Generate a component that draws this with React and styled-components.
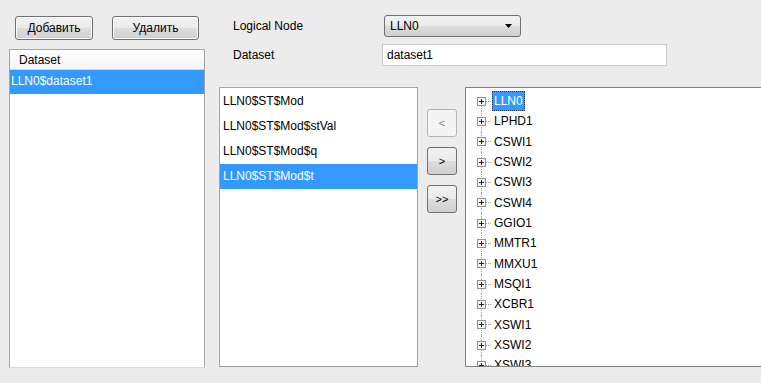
import React from "react";
import styled, { createGlobalStyle } from "styled-components";

const GlobalStyle = createGlobalStyle`
  html, body {
    margin: 0;
    padding: 0;
    background: #ececec;
    font-family: "Liberation Sans", Arial, sans-serif;
    font-size: 12px;
    color: #000;
    overflow: hidden;
  }
`;

const datasets = ["LLN0$dataset1"];
const members = [
  "LLN0$ST$Mod",
  "LLN0$ST$Mod$stVal",
  "LLN0$ST$Mod$q",
  "LLN0$ST$Mod$t",
];
const nodes = [
  "LLN0",
  "LPHD1",
  "CSWI1",
  "CSWI2",
  "CSWI3",
  "CSWI4",
  "GGIO1",
  "MMTR1",
  "MMXU1",
  "MSQI1",
  "XCBR1",
  "XSWI1",
  "XSWI2",
  "XSWI3",
];

const PlusBox = () => (
  <svg width="9" height="9" viewBox="0 0 9 9">
    <rect x="0.5" y="0.5" width="8" height="8" fill="#f4f4f4" stroke="#919191" />
    <path d="M2 4.5h5M4.5 2v5" stroke="#222" strokeWidth="1" />
  </svg>
);

const ArrowDown = () => (
  <svg width="7" height="4" viewBox="0 0 7 4">
    <path d="M0 0h7L3.5 4z" fill="#000" />
  </svg>
);

export default function App() {
  return (
    <>
      <GlobalStyle />
      <Page>
        <LeftColumn>
          <ButtonRow>
            <WinButton $w={78}>Добавить</WinButton>
            <WinButton $w={87}>Удалить</WinButton>
          </ButtonRow>
          <DatasetList>
            <ListHeader>Dataset</ListHeader>
            {datasets.map((d) => (
              <DatasetRow key={d} $selected>
                {d}
              </DatasetRow>
            ))}
          </DatasetList>
        </LeftColumn>

        <RightArea>
          <Form>
            <FieldLabel>Logical Node</FieldLabel>
            <Combo>
              <span>LLN0</span>
              <ArrowDown />
            </Combo>
            <FieldLabel>Dataset</FieldLabel>
            <TextInput>dataset1</TextInput>
          </Form>

          <BottomRow>
            <MemberList>
              {members.map((m, i) => (
                <MemberRow key={m} $selected={i === 3}>
                  {m}
                </MemberRow>
              ))}
            </MemberList>

            <MoveButtons>
              <MoveButton $disabled>&lt;</MoveButton>
              <MoveButton>&gt;</MoveButton>
              <MoveButton>&gt;&gt;</MoveButton>
            </MoveButtons>

            <Tree>
              {nodes.map((n, i) => (
                <TreeRow key={n} $first={i === 0} $last={i === nodes.length - 1}>
                  <PlusBox />
                  <Dash />
                  <TreeText $selected={i === 0}>{n}</TreeText>
                </TreeRow>
              ))}
            </Tree>
          </BottomRow>
        </RightArea>
      </Page>
    </>
  );
}

const Page = styled.div`
  display: flex;
  height: 383px;
  padding-left: 9px;
  box-sizing: border-box;
`;

const LeftColumn = styled.div`
  display: flex;
  flex-direction: column;
  width: 196px;
  flex-shrink: 0;
`;

const ButtonRow = styled.div`
  display: flex;
  gap: 19px;
  padding: 16px 0 0 6px;
  height: 24px;
`;

const WinButton = styled.div`
  width: ${(p) => p.$w}px;
  height: 24px;
  box-sizing: border-box;
  border: 1px solid #707070;
  border-radius: 3px;
  background: linear-gradient(#f2f2f2 0%, #ebebeb 48%, #dddddd 52%, #cfcfcf 100%);
  box-shadow: inset 0 0 0 1px #fcfcfc;
  display: flex;
  align-items: center;
  justify-content: center;
`;

const DatasetList = styled.div`
  margin-top: 9px;
  height: 319px;
  box-sizing: border-box;
  border: 1px solid #a5a5a5;
  border-bottom-color: #d8d8d8;
  background: #fff;
  overflow: hidden;
`;

const ListHeader = styled.div`
  height: 20px;
  box-sizing: border-box;
  padding-left: 9px;
  line-height: 21px;
  background: linear-gradient(#ffffff, #f3f4f6);
  border-bottom: 1px solid #d5d5d5;
`;

const DatasetRow = styled.div`
  height: 24px;
  line-height: 22px;
  padding-left: 1px;
  background: ${(p) => (p.$selected ? "#3399ff" : "transparent")};
  color: ${(p) => (p.$selected ? "#fff" : "#000")};
`;

const RightArea = styled.div`
  display: flex;
  flex-direction: column;
  margin-left: 14px;
  flex: 1;
  min-width: 0;
`;

const Form = styled.div`
  display: grid;
  grid-template-columns: 149px auto;
  grid-template-rows: 22px 22px;
  row-gap: 7px;
  padding: 15px 0 0 14px;
  align-items: center;
`;

const FieldLabel = styled.div`
  line-height: 22px;
`;

const Combo = styled.div`
  width: 137px;
  height: 22px;
  margin-left: 2px;
  box-sizing: border-box;
  border: 1px solid #707070;
  border-radius: 3px;
  background: linear-gradient(#f2f2f2 0%, #ebebeb 48%, #dddddd 52%, #cfcfcf 100%);
  display: flex;
  align-items: center;
  justify-content: space-between;
  padding: 0 8px 0 5px;
`;

const TextInput = styled.div`
  width: 285px;
  height: 22px;
  box-sizing: border-box;
  border: 1px solid #c9cbd0;
  background: #fff;
  padding-left: 4px;
  line-height: 20px;
`;

const BottomRow = styled.div`
  display: flex;
  margin-top: 21px;
  height: 280px;
`;

const MemberList = styled.div`
  width: 199px;
  height: 280px;
  box-sizing: border-box;
  border: 1px solid #a5a5a5;
  border-bottom-color: #9a9a9a;
  background: #fff;
  padding-top: 1px;
  flex-shrink: 0;
`;

const MemberRow = styled.div`
  height: 25px;
  line-height: 25px;
  padding-left: 3px;
  background: ${(p) => (p.$selected ? "#3399ff" : "transparent")};
  color: ${(p) => (p.$selected ? "#fff" : "#000")};
`;

const MoveButtons = styled.div`
  display: flex;
  flex-direction: column;
  gap: 10px;
  padding: 22px 0 0 9px;
  width: 30px;
  flex-shrink: 0;
`;

const MoveButton = styled.div`
  width: 30px;
  height: 28px;
  box-sizing: border-box;
  border: 1px solid ${(p) => (p.$disabled ? "#b5b5b5" : "#707070")};
  border-radius: 3px;
  background: ${(p) =>
    p.$disabled
      ? "#f4f4f4"
      : "linear-gradient(#f2f2f2 0%, #ebebeb 48%, #dddddd 52%, #cfcfcf 100%)"};
  color: ${(p) => (p.$disabled ? "#838383" : "#000")};
  display: flex;
  align-items: center;
  justify-content: center;
  font-size: 11px;
`;

const Tree = styled.div`
  margin-left: 8px;
  flex: 1;
  min-width: 320px;
  height: 280px;
  box-sizing: border-box;
  border: 1px solid #828282;
  border-right: none;
  background: #fff;
  padding: 3px 0 0 11px;
  overflow: hidden;
`;

const TreeRow = styled.div`
  position: relative;
  display: flex;
  align-items: center;
  height: 20.33px;

  &::before {
    content: "";
    position: absolute;
    left: 4px;
    top: ${(p) => (p.$first ? "50%" : "0")};
    bottom: ${(p) => (p.$last ? "50%" : "0")};
    border-left: 1px dotted #a0a0a0;
    z-index: 0;
  }

  svg {
    position: relative;
    z-index: 1;
  }
`;

const Dash = styled.span`
  width: 5px;
  border-top: 1px dotted #a0a0a0;
  margin-right: 1px;
`;

const TreeText = styled.span`
  padding: 0 2px;
  height: 20px;
  line-height: 20px;
  box-sizing: border-box;
  background: ${(p) => (p.$selected ? "#3399ff" : "transparent")};
  color: ${(p) => (p.$selected ? "#fff" : "#000")};
  outline: ${(p) => (p.$selected ? "1px dotted #1b3a66" : "none")};
  outline-offset: -1px;
`;
